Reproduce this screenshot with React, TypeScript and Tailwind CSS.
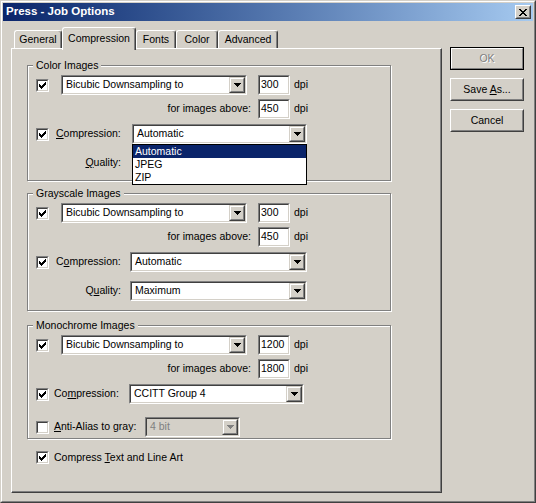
import React from 'react';

function Check({ checked = false }: { checked?: boolean }) {
  return (
    <div className="w-[13px] h-[13px] shrink-0 border border-t-[#808080] border-l-[#808080] border-r-white border-b-white">
      <div className="w-full h-full border border-t-[#404040] border-l-[#404040] border-r-[#d4d0c8] border-b-[#d4d0c8] bg-white flex items-center justify-center">
        {checked && (
          <svg width="7" height="7" viewBox="0 0 7 7" shapeRendering="crispEdges">
            <path d="M0 2h1v3H0zM1 3h1v3H1zM2 4h1v3H2zM3 3h1v3H3zM4 2h1v3H4zM5 1h1v3H5zM6 0h1v3H6z" fill="#000" />
          </svg>
        )}
      </div>
    </div>
  );
}

function ArrowBtn({ disabled = false }: { disabled?: boolean }) {
  return (
    <div className="w-[16px] h-[16px] shrink-0 border border-t-[#d4d0c8] border-l-[#d4d0c8] border-r-[#404040] border-b-[#404040]">
      <div className="w-full h-full border border-t-white border-l-white border-r-[#808080] border-b-[#808080] bg-[#d4d0c8] flex items-center justify-center">
        <svg width="7" height="4" viewBox="0 0 7 4" shapeRendering="crispEdges">
          <path d="M0 0h7v1H0zM1 1h5v1H1zM2 2h3v1H2zM3 3h1v1H3z" fill={disabled ? '#808080' : '#000'} />
        </svg>
      </div>
    </div>
  );
}

function Field({ className = '', disabled = false, children }: { className?: string; disabled?: boolean; children: React.ReactNode }) {
  return (
    <div className={`h-[20px] shrink-0 border border-t-[#808080] border-l-[#808080] border-r-white border-b-white ${className}`}>
      <div className={`h-full flex items-center border border-t-[#404040] border-l-[#404040] border-r-[#d4d0c8] border-b-[#d4d0c8] ${disabled ? 'bg-[#d4d0c8] text-[#808080]' : 'bg-white'}`}>
        {children}
      </div>
    </div>
  );
}

function Select({ text, className = '', disabled = false }: { text: string; className?: string; disabled?: boolean }) {
  return (
    <Field className={className} disabled={disabled}>
      <span className="flex-1 pl-[3px] whitespace-nowrap overflow-hidden">{text}</span>
      <ArrowBtn disabled={disabled} />
    </Field>
  );
}

function Num({ value }: { value: string }) {
  return (
    <Field className="w-[32px]">
      <span className="pl-[1px]">{value}</span>
    </Field>
  );
}

function Group({ title, className = '', children }: { title: string; className?: string; children: React.ReactNode }) {
  return (
    <div className={`relative w-[364px] border border-[#808080] shadow-[inset_1px_1px_0_#fff,1px_1px_0_#fff] pl-[8px] pt-[9px] ${className}`}>
      <span className="absolute left-[5px] top-[-8px] px-[3px] bg-[#d4d0c8] leading-[14px]">{title}</span>
      {children}
    </div>
  );
}

function DpiRows({ res, above }: { res: string; above: string }) {
  return (
    <>
      <div className="flex items-center h-[20px]">
        <Check checked />
        <Select text="Bicubic Downsampling to" className="ml-[12px] w-[186px]" />
        <div className="ml-[11px]"><Num value={res} /></div>
        <span className="ml-[4px]">dpi</span>
      </div>
      <div className="flex items-center h-[20px] mt-[4px]">
        <span className="w-[222px] text-right pr-[7px]">for images above:</span>
        <Num value={above} />
        <span className="ml-[4px]">dpi</span>
      </div>
    </>
  );
}

function Tab({ label, w, active = false }: { label: string; w: string; active?: boolean }) {
  return (
    <div
      className={`${w} flex justify-center border-l border-t border-r border-l-white border-t-white border-r-[#404040] rounded-t-[3px] shadow-[inset_-1px_0_0_#808080] bg-[#d4d0c8] ${
        active ? 'relative z-10 h-[23px] -mb-[2px] pt-[3px]' : 'h-[18px] items-center pt-[1px]'
      }`}
    >
      {label}
    </div>
  );
}

function Button({ children, isDefault = false, disabled = false }: { children: React.ReactNode; isDefault?: boolean; disabled?: boolean }) {
  return (
    <div className={`w-[74px] h-[23px] border ${isDefault ? 'border-black' : 'border-t-white border-l-white border-r-[#404040] border-b-[#404040]'}`}>
      <div
        className={`w-full h-full flex items-center justify-center border ${
          isDefault ? 'border-t-white border-l-white border-r-[#808080] border-b-[#808080]' : 'border-t-[#d4d0c8] border-l-[#d4d0c8] border-r-[#808080] border-b-[#808080]'
        } ${disabled ? 'text-[#808080] [text-shadow:1px_1px_0_#fff]' : ''}`}
      >
        <span>{children}</span>
      </div>
    </div>
  );
}

export default function App() {
  return (
    <div className="w-[536px] h-[503px] bg-[#d4d0c8] border border-t-[#d4d0c8] border-l-[#d4d0c8] border-r-[#404040] border-b-[#404040] font-['Liberation_Sans',Arial,sans-serif] text-[10.5px] text-black">
      <div className="w-full h-full border border-t-white border-l-white border-r-[#808080] border-b-[#808080] p-[1px]">
        {/* title bar */}
        <div className="h-[18px] flex items-center pl-[3px] pr-[2px] bg-gradient-to-r from-[#0a246a] to-[#a6caf0]">
          <span className="flex-1 text-white font-bold text-[11.5px]">Press - Job Options</span>
          <div className="w-[16px] h-[14px] border border-t-white border-l-white border-r-[#404040] border-b-[#404040] bg-[#d4d0c8]">
            <div className="w-full h-full border border-t-[#d4d0c8] border-l-[#d4d0c8] border-r-[#808080] border-b-[#808080] flex items-center justify-center">
              <svg width="8" height="7" viewBox="0 0 8 7" shapeRendering="crispEdges">
                <path d="M0 0h2v1H0zM6 0h2v1H6zM1 1h2v1H1zM5 1h2v1H5zM2 2h4v1H2zM3 3h2v1H3zM2 4h4v1H2zM1 5h2v1H1zM5 5h2v1H5zM0 6h2v1H0zM6 6h2v1H6z" fill="#000" />
              </svg>
            </div>
          </div>
        </div>

        <div className="flex pl-[8px] pt-[6px]">
          {/* left: tabs */}
          <div className="flex flex-col">
            <div className="flex items-end h-[21px] pl-[3px]">
              <Tab label="General" w="w-[48px]" />
              <Tab label="Compression" w="w-[74px]" active />
              <Tab label="Fonts" w="w-[40px]" />
              <Tab label="Color" w="w-[42px]" />
              <Tab label="Advanced" w="w-[60px]" />
            </div>
            <div className="w-[431px] h-[445px] border border-t-white border-l-white border-r-[#404040] border-b-[#404040] shadow-[inset_-1px_-1px_0_#808080] pl-[15px] pt-[16px]">
              <Group title="Color Images" className="h-[116px]">
                <DpiRows res="300" above="450" />
                <div className="flex items-center h-[20px] mt-[5px]">
                  <Check checked />
                  <span className="ml-[7px] w-[76px]"><u>C</u>ompression:</span>
                  <div className="relative">
                    <Select text="Automatic" className="w-[175px]" />
                    <div className="absolute left-0 top-[20px] w-[175px] z-20 border border-black bg-white">
                      <div className="h-[13px] leading-[13px] pl-[2px] bg-[#0a246a] text-white">Automatic</div>
                      <div className="h-[13px] leading-[13px] pl-[2px]">JPEG</div>
                      <div className="h-[13px] leading-[13px] pl-[2px]">ZIP</div>
                    </div>
                  </div>
                </div>
                <div className="flex items-center h-[20px] mt-[9px]">
                  <span className="w-[96px] text-right pr-[11px]"><u>Q</u>uality:</span>
                  <Select text="" className="w-[175px]" />
                </div>
              </Group>

              <Group title="Grayscale Images" className="h-[118px] mt-[12px]">
                <DpiRows res="300" above="450" />
                <div className="flex items-center h-[20px] mt-[5px]">
                  <Check checked />
                  <span className="ml-[7px] w-[74px]">C<u>o</u>mpression:</span>
                  <Select text="Automatic" className="w-[177px]" />
                </div>
                <div className="flex items-center h-[20px] mt-[9px]">
                  <span className="w-[94px] text-right pr-[9px]">Q<u>u</u>ality:</span>
                  <Select text="Maximum" className="w-[177px]" />
                </div>
              </Group>

              <Group title="Monochrome Images" className="h-[114px] mt-[14px]">
                <DpiRows res="1200" above="1800" />
                <div className="flex items-center h-[20px] mt-[5px]">
                  <Check checked />
                  <span className="ml-[5px] w-[75px]">Co<u>m</u>pression:</span>
                  <Select text="CCITT Group 4" className="w-[175px]" />
                </div>
                <div className="flex items-center h-[20px] mt-[13px]">
                  <Check />
                  <span className="ml-[5px] w-[91px]"><u>A</u>nti-Alias to gray:</span>
                  <Select text="4 bit" className="w-[95px]" disabled />
                </div>
              </Group>

              <div className="flex items-center h-[13px] mt-[12px] pl-[9px]">
                <Check checked />
                <span className="ml-[5px]">Compress <u>T</u>ext and Line Art</span>
              </div>
            </div>
          </div>

          {/* right: buttons */}
          <div className="flex flex-col gap-[8px] ml-[8px] pt-[20px]">
            <Button isDefault disabled>OK</Button>
            <Button>Save <u>A</u>s...</Button>
            <Button>Cancel</Button>
          </div>
        </div>
      </div>
    </div>
  );
}
